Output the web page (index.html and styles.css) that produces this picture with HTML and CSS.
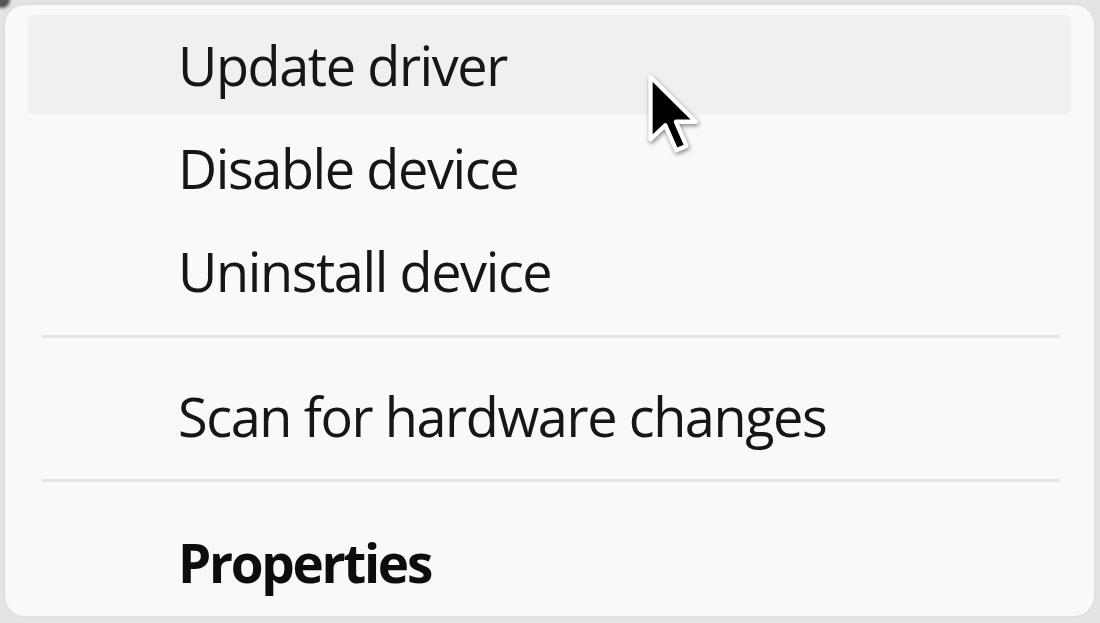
FILE: index.html
```html
<!DOCTYPE html>
<html lang="en">
<head>
  <meta charset="UTF-8">
  <meta name="viewport" content="width=device-width, initial-scale=1">
  <title>Device context menu</title>
  <link rel="stylesheet" href="styles.css">
</head>
<body>
  <div class="menu">
    <div class="item hover">Update driver</div>
    <div class="item">Disable device</div>
    <div class="item">Uninstall device</div>
    <div class="sep"></div>
    <div class="item">Scan for hardware changes</div>
    <div class="sep sep-2"></div>
    <div class="item bold">Properties</div>

    <svg class="cursor" width="60" height="86" viewBox="-2 -2 15 22">
      <path d="M0 0 L0 16 L3.8 12.4 L6.6 18.8 L9.2 17.7 L6.5 11.5 L11.6 11.5 Z" fill="#000" stroke="#fff" stroke-width="1.1" stroke-linejoin="round"/>
    </svg>
  </div>
</body>
</html>
```

FILE: styles.css
```css
*, *::before, *::after { box-sizing: border-box; }
html, body { height: 100%; }
body { position: relative; margin: 0; padding: 5px 6px 7px 5px; background: #e4e4e4; font-family: "Open Sans", "Noto Sans", sans-serif; overflow: hidden; }
body::before { content: ''; position: absolute; left: -6px; top: -8px; width: 16px; height: 16px; border-radius: 50%; background: #555; filter: blur(1.5px); }
.menu { position: relative; height: 100%; background: #f9f9f9; border-radius: 20px; padding: 10px 23px 0 23px; box-shadow: 0 0 3px rgba(0,0,0,0.08); }
.item { height: 100px; display: flex; align-items: center; padding-left: 150px; font-size: 54px; letter-spacing: -1.4px; color: #161616; border-radius: 6px; white-space: nowrap; }
.item + .item { margin-top: 3px; }
.item.hover { background: #f0f0f0; }
.item.bold { font-weight: 700; font-size: 53px; letter-spacing: -2.3px; color: #0d0d0d; }
.sep { height: 3px; background: #e3e3e3; margin: 14px 12px 28px 14px; }
.sep-2 { margin-top: 13px; margin-bottom: 30px; }
.cursor { position: absolute; left: 637px; top: 64px; filter: drop-shadow(1px 2px 2px rgba(0,0,0,0.45)) blur(0.6px); }
```
